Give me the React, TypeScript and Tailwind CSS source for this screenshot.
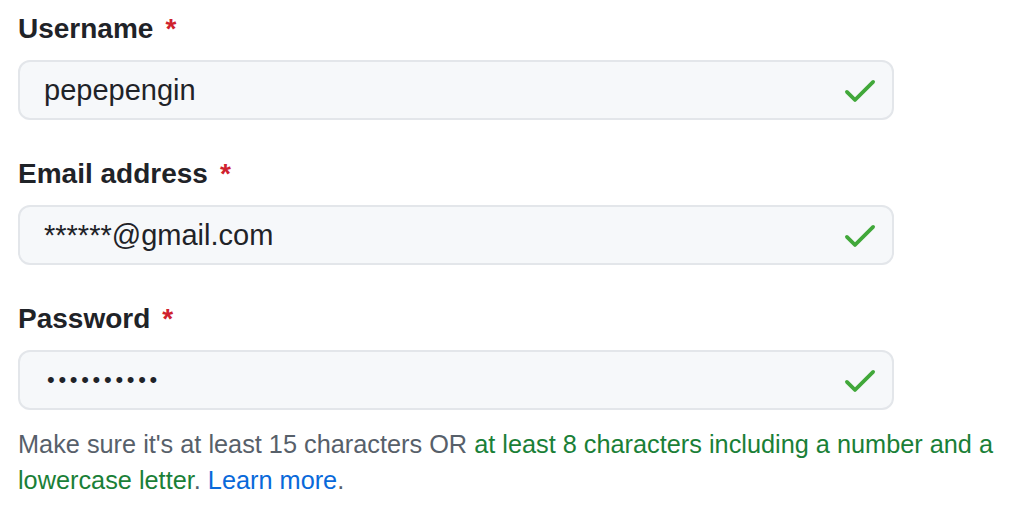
import React from "react";

function Check() {
  return (
    <svg width="40" height="40" viewBox="0 0 16 16" fill="#41a83a" aria-hidden="true">
      <path d="M13.78 4.22a.75.75 0 0 1 0 1.06l-7.25 7.25a.75.75 0 0 1-1.06 0L2.22 9.28a.751.751 0 0 1 .018-1.042.751.751 0 0 1 1.042-.018L6 10.94l6.72-6.72a.75.75 0 0 1 1.06 0Z" />
    </svg>
  );
}

function Field({ label, value, password, first }: { label: string; value: string; password?: boolean; first?: boolean }) {
  return (
    <div className={first ? "" : "mt-[33px]"}>
      <div className="h-[40px] leading-[42px] text-[28px] font-bold text-[#1f2328]">
        {label}<span className="ml-[12px] text-[#cf222e]">*</span>
      </div>
      <div className="mt-[12px] h-[60px] w-[876px] rounded-[12px] border-2 border-[#e3e6ea] bg-[#f6f8fa] flex items-center pl-[24px] pr-[12px]">
        {password ? (
          <span className="flex-1 pl-[3px] text-[22px] tracking-[3.7px] text-[#1f2328] leading-none">{value}</span>
        ) : (
          <span className="flex-1 text-[29px] text-[#1f2328] leading-none">{value}</span>
        )}
        <Check />
      </div>
    </div>
  );
}

export default function App() {
  return (
    <div className="w-[1024px] h-[520px] bg-white pl-[18px] pt-[8px] overflow-hidden" style={{ fontFamily: '"Liberation Sans", Arial, sans-serif' }}>
      <Field first label="Username" value="pepepengin" />
      <Field label="Email address" value="******@gmail.com" />
      <Field label="Password" value="••••••••••" password />
      <p className="mt-[16px] text-[25.3px] leading-[36px] text-[#57606a] whitespace-nowrap">
        Make sure it's at least 15 characters OR{" "}
        <span className="text-[#1a7f37]">at least 8 characters including a number and a</span>
        <br />
        <span className="text-[#1a7f37]">lowercase letter</span>. <span className="text-[#0969da]">Learn more</span>.
      </p>
    </div>
  );
}
